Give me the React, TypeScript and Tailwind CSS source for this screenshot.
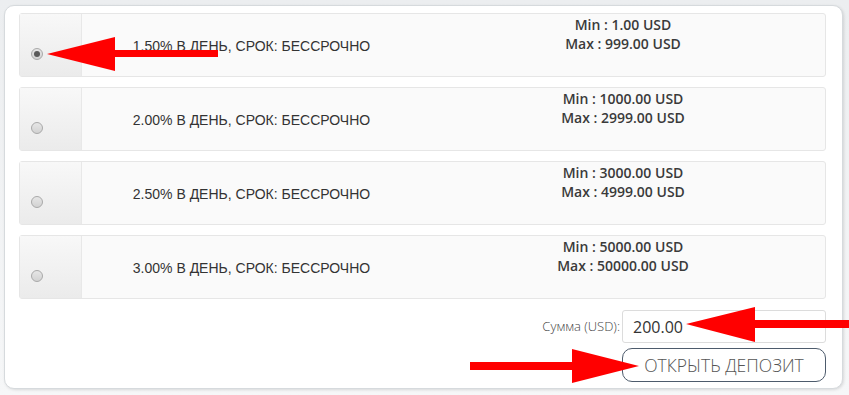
const PLANS = [
  { rate: '1.50', min: '1.00', max: '999.00', checked: true },
  { rate: '2.00', min: '1000.00', max: '2999.00', checked: false },
  { rate: '2.50', min: '3000.00', max: '4999.00', checked: false },
  { rate: '3.00', min: '5000.00', max: '50000.00', checked: false },
]

function Radio({ checked }: { checked: boolean }) {
  return (
    <span className="flex h-[12px] w-[12px] items-center justify-center rounded-full border border-[#a9a9a9] bg-gradient-to-b from-[#e6e6e6] to-[#d2d2d2]">
      {checked && <span className="h-[6px] w-[6px] rounded-full bg-[#5a5a5a]" />}
    </span>
  )
}

function PlanRow({ rate, min, max, checked }: (typeof PLANS)[number]) {
  return (
    <div className="flex h-[64px] rounded-[3px] border border-[#e6e6e6] bg-[#fafafa]">
      {/* radio cell */}
      <div className="w-[62px] shrink-0 border-r border-[#e8e8e8] bg-gradient-to-b from-[#f8f8f8] to-[#ebebeb] pl-[11px] pt-[34px]">
        <Radio checked={checked} />
      </div>
      <div className="flex w-[339px] shrink-0 items-center justify-center pt-[2px] font-['Liberation_Sans',Arial,sans-serif] text-[14px] text-[#333]">
        {rate}% В ДЕНЬ, СРОК: БЕССРОЧНО
      </div>
      <div className="flex-1 pt-[1px] text-center font-['Open_Sans',sans-serif] text-[14px] leading-[19px] font-semibold text-[#3a3a3a]">
        <div>Min : {min} USD</div>
        <div>Max : {max} USD</div>
      </div>
    </div>
  )
}

function Arrows() {
  return (
    <svg className="pointer-events-none absolute inset-0" width="849" height="395">
      <g fill="#ff0000">
        <polygon points="47,54 115,37 115,50 218,50 218,57 115,57 115,71" />
        <polygon points="686,324 755,307 755,320 849,320 849,328 755,328 755,342" />
        <polygon points="639,366 572,349 572,362 470,362 470,370 572,370 572,383" />
      </g>
    </svg>
  )
}

export default function App() {
  return (
    <div className="relative h-[395px] w-[849px] overflow-hidden bg-gradient-to-b from-[#eceef0] to-[#f6f7f8] pl-[4px] pt-[5px]">
      <div className="flex h-[384px] w-[839px] flex-col rounded-[10px] border border-[#d6dadd] bg-white pl-[14px] pr-[16px] pt-[7px] shadow-[1px_1px_3px_rgba(0,0,0,0.12)]">
        <div className="flex flex-col gap-[10px]">
          {PLANS.map(p => (
            <PlanRow key={p.rate} {...p} />
          ))}
        </div>

        <div className="mt-[11px] flex items-center justify-end">
          <span className="mr-[2px] font-['Open_Sans',sans-serif] text-[13px] font-light text-[#444]">Сумма (USD):</span>
          <div className="flex h-[33px] w-[204px] items-center rounded-[3px] border border-[#dcdcdc] bg-white pl-[10px] font-['Open_Sans',sans-serif] text-[16px] text-[#333]">
            200.00
          </div>
        </div>

        <div className="mt-[5px] flex justify-end">
          <button className="flex h-[34px] w-[204px] items-center justify-center rounded-[10px] border border-[#4d5b6c] bg-white font-['Open_Sans',sans-serif] text-[17.5px] font-light text-[#555]">
            ОТКРЫТЬ ДЕПОЗИТ
          </button>
        </div>
      </div>
      <Arrows />
    </div>
  )
}
